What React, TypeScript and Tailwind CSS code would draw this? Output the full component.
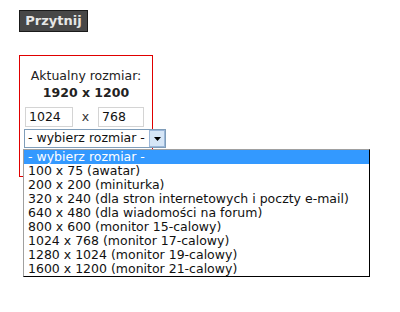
const sizes = [
  '100 x 75 (awatar)',
  '200 x 200 (miniturka)',
  '320 x 240 (dla stron internetowych i poczty e-mail)',
  '640 x 480 (dla wiadomości na forum)',
  '800 x 600 (monitor 15-calowy)',
  '1024 x 768 (monitor 17-calowy)',
  '1280 x 1024 (monitor 19-calowy)',
  '1600 x 1200 (monitor 21-calowy)',
];

export default function App() {
  return (
    <div className="relative h-[312px] w-[400px] bg-white font-['DejaVu_Sans',sans-serif] text-[12.5px] text-[#111]">
      <div className="pl-[19px] pt-[10px]">
        <button className="flex h-[22px] w-[69px] items-center justify-center border border-[#1a1a1a] bg-[#474747] text-[13px] font-bold text-[#e6e6e6]">
          Przytnij
        </button>
      </div>

      <div className="ml-[19px] mt-[23px] h-[122px] w-[134px] border border-[#e00000] pt-[11px]">
        <div className="text-center leading-[17px] text-[#222]">Aktualny rozmiar:</div>
        <div className="text-center font-bold leading-[17px] text-[#222]">1920 x 1200</div>
        <div className="mt-[6px] flex items-center pl-[5px]">
          <div className="flex h-[20px] w-[48px] items-center border border-[#d4d4d4] pl-[3px] leading-none">1024</div>
          <span className="w-[25px] text-center text-[#333]">x</span>
          <div className="flex h-[20px] w-[46px] items-center border border-[#d4d4d4] pl-[3px] leading-none">768</div>
        </div>
        <div className="ml-[4px] mt-[2px] flex h-[19px] w-[142px] items-center border border-[#7f9db9] bg-white">
          <span className="flex-1 pl-[3px] leading-none whitespace-nowrap">- wybierz rozmiar -</span>
          <span className="flex h-[17px] w-[16px] items-center justify-center border border-[#9bb7d9] bg-[#d6e6f7]">
            <svg width="7" height="4" viewBox="0 0 7 4">
              <path d="M0 0h7L3.5 4z" fill="#000" />
            </svg>
          </span>
        </div>
      </div>

      <ul className="absolute left-[23px] top-[149px] w-[347px] border-t border-l border-t-[#a0a0a0] border-l-[#a0a0a0] border-r border-b border-r-black border-b-black bg-white">
        <li className="h-[14px] bg-[#3399ff] pl-[4px] leading-[14px] text-white whitespace-nowrap">- wybierz rozmiar -</li>
        {sizes.map((s) => (
          <li key={s} className="h-[14px] pl-[4px] leading-[14px] whitespace-nowrap">
            {s}
          </li>
        ))}
      </ul>
    </div>
  );
}
